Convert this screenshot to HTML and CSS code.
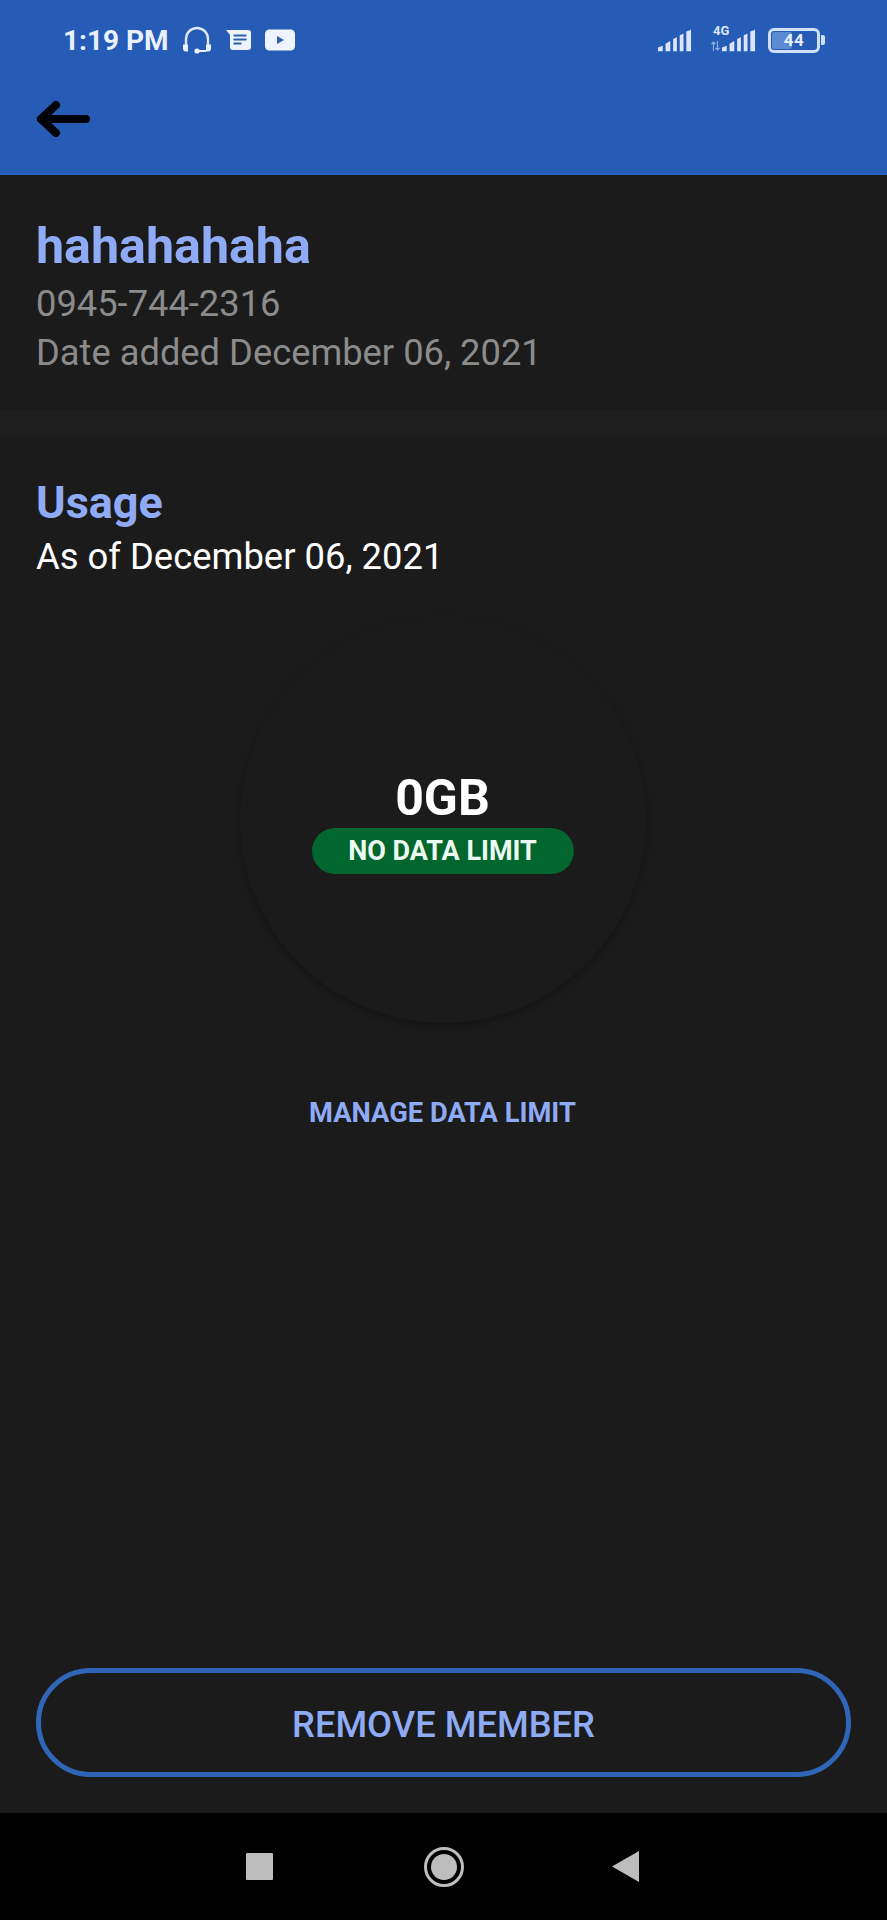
FILE: index.html
```html
<!DOCTYPE html>
<html lang="en">
<head>
    <meta charset="UTF-8">
    <meta name="viewport" content="width=device-width, initial-scale=1.0">
    <title>Member details</title>
    <link rel="stylesheet" href="styles.css">
</head>
<body>
<div class="app">
    <header class="top">
        <div class="status">
            <div class="status-left">
                <span class="clock">1:19 PM</span>
                <svg class="ico-headset" width="30" height="28" viewBox="0 0 30 28">
                    <path d="M4 21V13a11 11 0 0 1 22 0v8" fill="none" stroke="#dfe9fb" stroke-width="2.4"/>
                    <path d="M1 18.500h5v7H4a3 3 0 0 1-3-3zM24 18.500h5v4a3 3 0 0 1-3 3h-2z" fill="#eaf1fd"/>
                    <path d="M15 25h9" stroke="#eaf1fd" stroke-width="2"/>
                    <circle cx="15" cy="25" r="2.6" fill="#eaf1fd"/>
                </svg>
                <svg class="ico-msg" width="26" height="22" viewBox="0 0 26 22">
                    <path d="M0 1h22a3 3 0 0 1 3 3v14a3 3 0 0 1-3 3H7a3 3 0 0 1-3-3V6z" fill="#eef4fe"/>
                    <path d="M7.500 6.500h13M7.500 10.500h13M7.500 14.500h8" stroke="#2a5fae" stroke-width="2"/>
                </svg>
                <svg class="ico-yt" width="30" height="22" viewBox="0 0 30 22">
                    <rect width="30" height="21" y="0.500" rx="4.500" fill="#eef4fe"/>
                    <path d="M12 7l7 4-7 4z" fill="#2a5fae"/>
                </svg>
            </div>
            <div class="status-right">
                <svg width="34" height="25" viewBox="0 0 36 25" fill="#dbe6fa">
                    <path d="M0 24v-4l5-2v6zM8 24v-8l5-3v11zM16 24V11l4-2v15zM23 24V7l4-2v19zM30 24V3l5-2v23z"/>
                </svg>
                <div class="sim">
                    <span class="sim-tag">4G</span>
                    <svg class="sim-arrows" width="9" height="10" viewBox="0 0 9 10">
                        <path d="M2.500 10V1M0.500 3l2-2 2 2M6.500 0v9M4.500 7l2 2 2-2" fill="none" stroke="#8fb0e6" stroke-width="1.200"/>
                    </svg>
                    <svg width="34" height="25" viewBox="0 0 36 25" fill="#dbe6fa">
                        <path d="M0 24v-4l5-2v6zM8 24v-8l5-3v11zM16 24V11l4-2v15zM23 24V7l4-2v19zM30 24V3l5-2v23z"/>
                    </svg>
                </div>
                <div class="battery">
                    <div class="battery-body">
                        <span class="battery-level"></span>
                        <span class="battery-num">44</span>
                    </div>
                    <span class="battery-nub"></span>
                </div>
            </div>
        </div>
        <div class="toolbar">
            <svg width="56" height="40" viewBox="0 0 56 40">
                <path d="M50 20H5M20 6L5 20l15 14" fill="none" stroke="#020308" stroke-width="8" stroke-linecap="round" stroke-linejoin="round"/>
            </svg>
        </div>
    </header>

    <main class="content">
        <section class="member">
            <h1 class="member-name">hahahahaha</h1>
            <p class="member-line">0945-744-2316</p>
            <p class="member-line">Date added December 06, 2021</p>
        </section>
        <div class="band"></div>
        <section class="usage">
            <h2 class="usage-title">Usage</h2>
            <p class="usage-date">As of December 06, 2021</p>
            <div class="gauge">
                <span class="gauge-value">0GB</span>
                <span class="gauge-pill">NO DATA LIMIT</span>
            </div>
            <a class="manage-link">MANAGE DATA LIMIT</a>
        </section>
        <button class="remove-btn">REMOVE MEMBER</button>
    </main>

    <nav class="navbar">
        <span class="nav-square"></span>
        <span class="nav-home"><span class="nav-home-dot"></span></span>
        <svg width="27" height="31" viewBox="0 0 27 31"><path d="M27 0v31L0 15.500z" fill="#bdbdbd"/></svg>
    </nav>
</div>
</body>
</html>
```

FILE: styles.css
```css
* {
    box-sizing: border-box;
}
body {
    margin: 0;
    background: #1b1b1c;
    font-family: Roboto, "Liberation Sans", sans-serif;
}
p, h1, h2 {
    margin: 0;
}
.app {
    height: 1920px;
    display: flex;
    flex-direction: column;
}

/* blue top part */
.top {
    height: 175px;
    background: #265bb6;
    border-bottom: 2px solid #2b64c0;
    padding: 25px 62px 0 36px;
}
.status {
    height: 30px;
    display: flex;
    justify-content: space-between;
    align-items: center;
    padding-left: 27px;
}
.status-left {
    display: flex;
    align-items: center;
}
.clock {
    color: #eaf1fd;
    font-size: 28px;
    font-weight: 700;
    margin-right: 13px;
}
.ico-msg {
    margin-left: 14px;
}
.ico-yt {
    margin-left: 13px;
}
.status-right {
    display: flex;
    align-items: flex-end;
    gap: 12px;
}
.sim {
    position: relative;
    padding-left: 10px;
    display: flex;
    align-items: flex-end;
    gap: 2px;
    margin-left: 7px;
}
.sim-tag {
    position: absolute;
    left: 2px;
    top: -5px;
    color: #dbe6fa;
    font-size: 13px;
    font-weight: 700;
}
.sim-arrows {
    margin-left: -10px;
    margin-bottom: 2px;
}
.battery {
    display: flex;
    align-items: center;
    gap: 1px;
}
.battery-body {
    position: relative;
    width: 52px;
    height: 25px;
    border: 3px solid #cfe0f8;
    border-radius: 6px;
    display: flex;
    align-items: center;
    justify-content: center;
}
.battery-level {
    position: absolute;
    left: 1px;
    top: 1px;
    bottom: 1px;
    width: 44%;
    background: #5c8bd4;
    border-radius: 2px;
}
.battery-num {
    position: relative;
    color: #e6effc;
    font-size: 17px;
    font-weight: 700;
    letter-spacing: 0.5px;
}
.battery-nub {
    width: 4px;
    height: 10px;
    background: #cfe0f8;
    border-radius: 0 2px 2px 0;
}
.toolbar {
    margin-top: 44px;
}
.toolbar svg {
    display: block;
}

/* content */
.content {
    flex: 1;
    display: flex;
    flex-direction: column;
}
.member {
    height: 235px;
    padding: 41px 36px 0;
}
.member-name {
    color: #8fabf5;
    font-size: 50.200px;
    font-weight: 700;
    line-height: 60px;
    margin-bottom: 3px;
}
.member-line {
    color: #8b8b8b;
    font-size: 36.300px;
    line-height: 49px;
}
.band {
    height: 26px;
    background: #1e1e1f;
}
.usage {
    flex: 1;
    padding: 42px 38px 0 36px;
    display: flex;
    flex-direction: column;
}
.usage-title {
    color: #8fabf5;
    font-size: 45px;
    font-weight: 700;
    line-height: 50px;
}
.usage-date {
    color: #fff;
    font-size: 36.400px;
    line-height: 50px;
    margin-top: 4px;
}
.gauge {
    width: 406px;
    height: 406px;
    margin: 35px auto 0;
    border-radius: 50%;
    box-shadow: 0 3px 6px rgba(0, 0, 0, 0.28);
    display: flex;
    flex-direction: column;
    align-items: center;
    padding-top: 153px;
}
.gauge-value {
    color: #fff;
    font-size: 50px;
    font-weight: 700;
    line-height: 56px;
}
.gauge-pill {
    width: 262px;
    height: 46px;
    margin-top: 2px;
    border-radius: 23px;
    background: #02662f;
    color: #edfaf1;
    font-size: 27px;
    font-weight: 700;
    line-height: 46px;
    text-align: center;
}
.manage-link {
    align-self: center;
    margin-top: 74px;
    color: #8fabf5;
    font-size: 27.300px;
    font-weight: 700;
    line-height: 32px;
}
.remove-btn {
    height: 109px;
    margin: 0 36px 36px;
    padding-top: 4px;
    border: 5px solid #2f66b8;
    border-radius: 55px;
    background: none;
    color: #8fabf5;
    font-family: inherit;
    font-size: 36.300px;
    font-weight: 500;
}

/* android buttons */
.navbar {
    height: 107px;
    background: #000;
    display: flex;
    align-items: center;
    padding-left: 246px;
}
.nav-square {
    width: 27px;
    height: 27px;
    background: #bdbdbd;
    border-radius: 1px;
}
.nav-home {
    width: 40px;
    height: 40px;
    margin-left: 151px;
    margin-right: 148px;
    border: 3px solid #bdbdbd;
    border-radius: 50%;
    display: flex;
    align-items: center;
    justify-content: center;
}
.nav-home-dot {
    width: 26px;
    height: 26px;
    border-radius: 50%;
    background: #bdbdbd;
}
```
